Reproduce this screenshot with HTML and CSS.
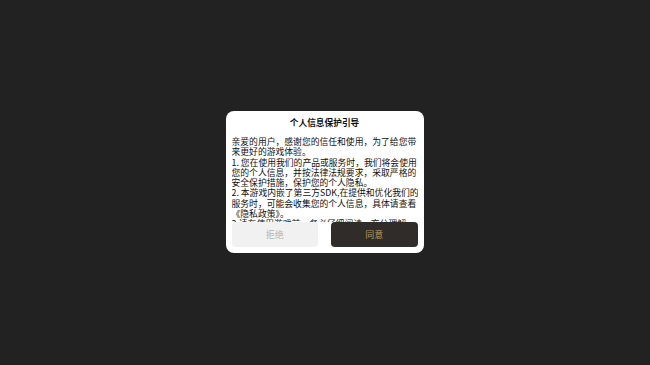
FILE: index.html
```html
<!DOCTYPE html>
<html lang="zh-CN">
<head>
    <meta charset="UTF-8">
    <meta name="viewport" content="width=device-width, initial-scale=1.0">
    <title>个人信息保护引导</title>
    <link rel="stylesheet" href="styles.css">
</head>
<body>
    <div class="dialog">
        <div class="dialog-title">个人信息保护引导</div>

        <div class="dialog-content">
            <p>亲爱的用户，感谢您的信任和使用，为了给您带<br>来更好的游戏体验。</p>
            <p>1. 您在使用我们的产品或服务时，我们将会使用<br>您的个人信息，并按法律法规要求，采取严格的<br>安全保护措施，保护您的个人隐私。</p>
            <p>2. 本游戏内嵌了第三方SDK,在提供和优化我们的<br>服务时，可能会收集您的个人信息，具体请查看<br>《隐私政策》。</p>
            <p>3.请在使用游戏前，务必仔细阅读，充分理解<br>《隐私政策》的各项条款。</p>
        </div>

        <div class="dialog-actions">
            <button class="btn btn-reject">拒绝</button>
            <button class="btn btn-agree">同意</button>
        </div>
    </div>
</body>
</html>
```

FILE: styles.css
```css
* {
    margin: 0;
    padding: 0;
    box-sizing: border-box;
}

body {
    font-family: "Noto Sans CJK SC", "Noto Sans", sans-serif;
    background: #222222;
    width: 650px;
    height: 365px;
    display: flex;
    justify-content: center;
    align-items: center;
}

.dialog {
    width: 198px;
    height: 142px;
    margin-left: -1px;
    margin-top: -1px;
    background: #ffffff;
    border-radius: 8px;
    padding: 0 6px 6px;
    display: flex;
    flex-direction: column;
}

.dialog-title {
    height: 24px;
    line-height: 23px;
    text-align: center;
    font-size: 8.7px;
    font-weight: 700;
    color: #111111;
}

.dialog-content {
    flex: 1;
    overflow: hidden;
    padding-top: 2px;
    font-size: 8.8px;
    line-height: 10.25px;
    color: #111111;
    white-space: nowrap;
}

.dialog-actions {
    display: flex;
    gap: 13px;
    height: 25px;
}

.btn {
    flex: 1;
    border: none;
    border-radius: 4px;
    font-family: inherit;
    font-size: 9px;
}

.btn-reject {
    background: #f1f1f1;
    color: #b4b4b4;
}

.btn-agree {
    background: #2f2c2a;
    color: #b59a62;
}
```
